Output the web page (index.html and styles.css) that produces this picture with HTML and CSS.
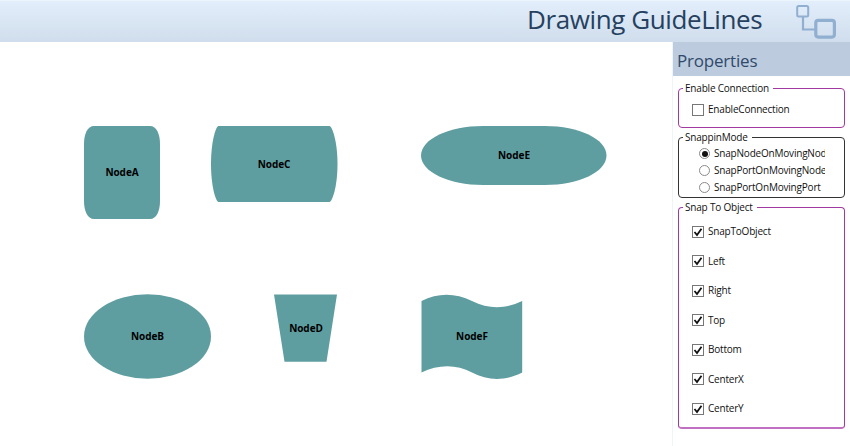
FILE: index.html
```
<!DOCTYPE html>
<html lang="en">
<head>
<meta charset="utf-8">
<title>Drawing GuideLines</title>
<link rel="stylesheet" href="styles.css">
</head>
<body>
<header class="header">
  <h1 class="title">Drawing GuideLines</h1>
  <svg class="logo" width="42" height="36" viewBox="0 0 42 36" fill="none" stroke="#91afd1">
    <path d="M7 13V25.5H20" stroke-width="2.2"/>
    <rect x="1.200" y="2" width="11" height="10.500" rx="1.500" stroke-width="2"/>
    <rect x="19.800" y="16.300" width="18.600" height="16.800" rx="2.500" stroke-width="3.200"/>
  </svg>
</header>
<main class="main">
  <section class="canvas">
    <div class="node node-a">
      <svg width="76" height="93"><path d="M10 0H66C72.500 0 76 8 76 18V75C76 85 72.500 93 66 93H10C3.500 93 0 85 0 75V18C0 8 3.500 0 10 0Z"/></svg>
      <span class="label">NodeA</span>
    </div>
    <div class="node node-b">
      <svg width="127" height="85"><ellipse cx="63.500" cy="42.500" rx="63.500" ry="42.200"/></svg>
      <span class="label">NodeB</span>
    </div>
    <div class="node node-c">
      <svg width="127" height="76"><path d="M7.500 0H118.500C121 0 126.500 15 126.500 38S121 76 118.500 76H7.500C5 76 0 61 0 38S5 0 7.500 0Z"/></svg>
      <span class="label">NodeC</span>
    </div>
    <div class="node node-d">
      <svg width="64" height="68"><path d="M0 .5H63L52.500 67.700H10.500Z"/></svg>
      <span class="label">NodeD</span>
    </div>
    <div class="node node-e">
      <svg width="186" height="59"><path d="M62 0H124C158 0 185.500 13 185.500 29.500S158 59 124 59H62C28 59 0 46 0 29.500S28 0 62 0Z"/></svg>
      <span class="label">NodeE</span>
    </div>
    <div class="node node-f">
      <svg width="102" height="85"><path d="M.5 7C17-1.500 34-1.500 51 7S84.500 15 101.200 7V78.500C84.500 87 67 87 51 78.500S17 70.500 .5 78.500Z"/></svg>
      <span class="label">NodeF</span>
    </div>
  </section>
  <aside class="panel">
    <h2 class="panel-title"><span>Properties</span></h2>
    <div class="groups">
      <fieldset class="group group-connection">
        <legend>Enable Connection</legend>
        <label class="row"><i class="check"></i><span>EnableConnection</span></label>
      </fieldset>
      <fieldset class="group group-mode">
        <legend>SnappinMode</legend>
        <label class="row"><i class="radio selected"></i><span>SnapNodeOnMovingNode</span></label>
        <label class="row"><i class="radio"></i><span>SnapPortOnMovingNode</span></label>
        <label class="row"><i class="radio"></i><span>SnapPortOnMovingPort</span></label>
      </fieldset>
      <fieldset class="group group-object">
        <legend>Snap To Object</legend>
        <label class="row"><i class="check"><svg width="10" height="10"><path d="M1.500 5L4 8L8.500 1.800"/></svg></i><span>SnapToObject</span></label>
        <label class="row"><i class="check"><svg width="10" height="10"><path d="M1.500 5L4 8L8.500 1.800"/></svg></i><span>Left</span></label>
        <label class="row"><i class="check"><svg width="10" height="10"><path d="M1.500 5L4 8L8.500 1.800"/></svg></i><span>Right</span></label>
        <label class="row"><i class="check"><svg width="10" height="10"><path d="M1.500 5L4 8L8.500 1.800"/></svg></i><span>Top</span></label>
        <label class="row"><i class="check"><svg width="10" height="10"><path d="M1.500 5L4 8L8.500 1.800"/></svg></i><span>Bottom</span></label>
        <label class="row"><i class="check"><svg width="10" height="10"><path d="M1.500 5L4 8L8.500 1.800"/></svg></i><span>CenterX</span></label>
        <label class="row"><i class="check"><svg width="10" height="10"><path d="M1.500 5L4 8L8.500 1.800"/></svg></i><span>CenterY</span></label>
      </fieldset>
    </div>
  </aside>
</main>
</body>
</html>
```
FILE: styles.css
```
* { box-sizing: border-box; }
body {
  margin: 0;
  height: 446px;
  display: flex;
  flex-direction: column;
  overflow: hidden;
  background: #fff;
  color: #111;
  font: 10px/15px "Open Sans", "Noto Sans", sans-serif;
  letter-spacing: -0.2px;
}
svg { display: block; }
.header {
  height: 42px;
  flex: none;
  display: flex;
  justify-content: flex-end;
  padding-right: 12px;
  background: linear-gradient(#e2eefb, #d0ddec);
  border-top: 1px solid #edf5fc;
}
.title {
  margin: 0;
  width: 269px;
  font-size: 26px;
  line-height: 37px;
  font-weight: 400;
  letter-spacing: -0.4px;
  white-space: nowrap;
  color: #26415f;
}
.logo { margin-top: 3px; }
.main { flex: 1; display: flex; min-height: 0; }
.canvas { flex: 1; position: relative; }
.node { position: absolute; display: grid; place-items: center; fill: #5f9ea0; }
.node > * { grid-area: 1 / 1; }
.label { font-weight: 700; font-size: 10px; letter-spacing: -0.05px; color: #000; }
.node-a { left: 84px; top: 84px; }
.node-b { left: 84px; top: 252px; }
.node-c { left: 210.5px; top: 84px; }
.node-d { left: 274px; top: 252px; }
.node-e { left: 421px; top: 84px; }
.node-f { left: 421px; top: 252px; }
.panel { width: 178px; border-left: 1px solid #edf4fb; }
.panel-title {
  margin: 0;
  height: 34px;
  padding-left: 4px;
  background: #bdcbdf;
  color: #2f4a6a;
  font-size: 17px;
  line-height: 37px;
  font-weight: 400;
}
.groups { padding: 5px 5px 0; display: flex; flex-direction: column; gap: 2px; }
.group {
  margin: 0;
  min-width: 0;
  padding: 0;
  border: 1px solid #a03aa0;
  border-radius: 4px;
}
.group legend { margin-left: 4px; padding: 0 4px 0 2px; height: 15px; white-space: nowrap; }
.group-connection { height: 47px; }
.group-mode { height: 68px; border-color: #333; }
.group-object { height: 229px; border-bottom: 2px solid #c070c0; }
.row { display: flex; align-items: center; padding-left: 13px; white-space: nowrap; }
.check {
  width: 12px;
  height: 12px;
  margin-right: 4px;
  flex: none;
  border: 1px solid #777;
}
.check path { fill: none; stroke: #111; stroke-width: 1.8; }
.radio {
  width: 11px;
  height: 11px;
  margin-right: 4px;
  flex: none;
  display: grid;
  place-items: center;
  border: 1px solid #8a8a8a;
  border-radius: 50%;
}
.selected::after { content: ""; width: 6px; height: 6px; border-radius: 50%; background: #111; }
.group-connection .row { margin-top: 6px; }
.group-mode .row { height: 17px; width: 146px; padding-left: 20px; overflow: hidden; }
.group-object .row { height: 29.5px; }
.group-object .row:first-of-type { margin-top: 2px; }
```
